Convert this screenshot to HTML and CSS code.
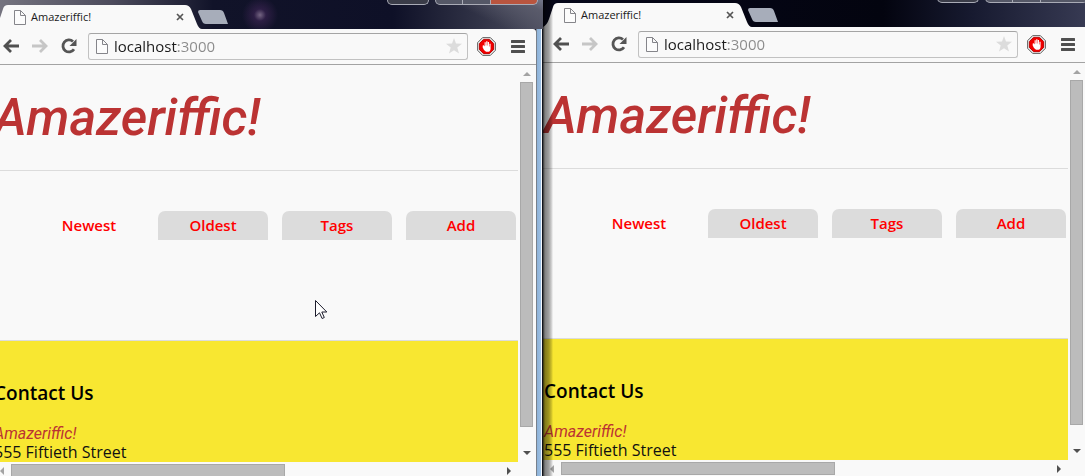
FILE: index.html
```html
<!DOCTYPE html>
<html lang="en">
<head>
<meta charset="utf-8">
<title>Amazeriffic!</title>
<link rel="stylesheet" href="styles.css">
</head>
<body>
<svg class="symbols" aria-hidden="true">
  <symbol id="page" viewBox="0 0 12 15"><path d="M.5.5h6l5 5v9H.5zM6.5.5v5h5" fill="#fcfcfc" stroke="#85858a"/></symbol>
  <symbol id="close" viewBox="0 0 8 8"><path d="M1 1l6 6M7 1L1 7" stroke="#555" stroke-width="1.7"/></symbol>
  <symbol id="tab" viewBox="0 0 209 24"><path d="M0 24Q4 22 6 16L10 4Q11 0 15 0H192Q196 0 198 4L204 19Q206 24 209 24Z" fill="#f9f9f9"/></symbol>
  <symbol id="newtab" viewBox="0 0 30 14"><path d="M2 0H22Q25 0 26 3L30 14H8Q5 14 4 11L0 2Q0 0 2 0Z" fill="#a7adba"/></symbol>
  <symbol id="arrow" viewBox="0 0 16 14"><path d="M8 1L2 7l6 6M2 7h14" fill="none" stroke="currentColor" stroke-width="2.8"/></symbol>
  <symbol id="reload" viewBox="0 0 16 16"><path d="M13 11.2A6 6 0 1 1 12 3.5" fill="none" stroke="#555" stroke-width="2.8"/><path d="M15.500 1v7H8.500z" fill="#555"/></symbol>
  <symbol id="star" viewBox="0 0 16 16"><path d="M8 0l2 5.500 6 .2-4.700 3.700L13 15.500l-5-3.300-5 3.300 1.700-6.100L0 5.700l6-.2z" fill="#dcdcdc"/></symbol>
  <symbol id="block" viewBox="0 0 20 20"><path d="M6 .5h8L19.500 6v8L14 19.500H6L.5 14V6z" fill="#ddd" stroke="#666"/><path d="M7 2.500h6L17.500 7v6L13 17.500H7L2.500 13V7z" fill="#f00000" stroke="#c00000"/><path d="M6 9l1.200-.4L8 10V5.500h1.200V9h.5V4.500H11V9h.4V5.200h1.200V10h.5V7h1.200v5.500Q14 15.500 11 15.500H9.500Q7.500 15 6 11z" fill="#fff"/></symbol>
  <symbol id="menu" viewBox="0 0 14 13"><path d="M1 1.500h12M1 6.500h12M1 11.500h12" stroke="#505050" stroke-width="3" stroke-linecap="round"/></symbol>
  <symbol id="tri" viewBox="0 0 8 4"><path d="M4 0l4 4H0z" fill="currentColor"/></symbol>
  <symbol id="side" viewBox="0 0 4 8"><path d="M0 0l4 4-4 4z" fill="currentColor"/></symbol>
</svg>
<div class="desktop">
  <section class="window front">
    <div class="titlebar">
      <div class="tab">
        <svg class="tab-shape"><use href="#tab"/></svg>
        <svg class="page-icon"><use href="#page"/></svg>
        <span class="tab-title">Amazeriffic!</span>
        <button class="tab-close" aria-label="Close tab"><svg><use href="#close"/></svg></button>
      </div>
      <button class="new-tab" aria-label="New tab"><svg><use href="#newtab"/></svg></button>
      <div class="captions">
        <button class="profile" aria-label="Profile"></button>
        <button aria-label="Minimize"></button><button aria-label="Maximize"></button><button class="exit" aria-label="Close"></button>
      </div>
    </div>
    <div class="toolbar">
      <button class="nav-btn" aria-label="Back"><svg><use href="#arrow"/></svg></button>
      <button class="nav-btn forward" aria-label="Forward"><svg><use href="#arrow"/></svg></button>
      <button class="nav-btn reload" aria-label="Reload"><svg><use href="#reload"/></svg></button>
      <div class="address">
        <svg class="page-icon"><use href="#page"/></svg>
        <input type="text" aria-label="Address" value="localhost:3000">
        <button class="star" aria-label="Bookmark"><svg><use href="#star"/></svg></button>
      </div>
      <button class="block" aria-label="Ad blocker"><svg><use href="#block"/></svg></button>
      <button class="menu" aria-label="Menu"><svg><use href="#menu"/></svg></button>
    </div>
    <div class="viewport">
      <div class="page">
        <header><h1>Amazeriffic!</h1></header>
        <main>
          <nav class="tabs"><a class="active" href="#newest">Newest</a><a href="#oldest">Oldest</a><a href="#tags">Tags</a><a href="#add">Add</a></nav>
        </main>
        <footer>
          <h2>Contact Us</h2>
          <address><em>Amazeriffic!</em><br>555 Fiftieth Street</address>
        </footer>
      </div>
      <div class="vscroll"><svg class="up"><use href="#tri"/></svg><div class="track"><div class="thumb"></div></div><svg class="down"><use href="#tri"/></svg></div>
      <div class="hscroll"><svg class="left"><use href="#side"/></svg><div class="track"><div class="thumb"></div></div><svg class="right"><use href="#side"/></svg></div>
    </div>
    <svg class="cursor" viewBox="0 0 13 20"><path d="M.5.5v16l4-3.700 2.600 5.700 2.200-1-2.500-5.500h5z" fill="#fff" stroke="#1c1c2c"/></svg>
  </section>
  <section class="window back">
    <div class="titlebar">
      <div class="tab">
        <svg class="tab-shape"><use href="#tab"/></svg>
        <svg class="page-icon"><use href="#page"/></svg>
        <span class="tab-title">Amazeriffic!</span>
        <button class="tab-close" aria-label="Close tab"><svg><use href="#close"/></svg></button>
      </div>
      <button class="new-tab" aria-label="New tab"><svg><use href="#newtab"/></svg></button>
      <div class="captions">
        <button class="profile" aria-label="Profile"></button>
        <button aria-label="Minimize"></button><button aria-label="Maximize"></button><button class="exit" aria-label="Close"></button>
      </div>
    </div>
    <div class="toolbar">
      <button class="nav-btn" aria-label="Back"><svg><use href="#arrow"/></svg></button>
      <button class="nav-btn forward" aria-label="Forward"><svg><use href="#arrow"/></svg></button>
      <button class="nav-btn reload" aria-label="Reload"><svg><use href="#reload"/></svg></button>
      <div class="address">
        <svg class="page-icon"><use href="#page"/></svg>
        <input type="text" aria-label="Address" value="localhost:3000">
        <button class="star" aria-label="Bookmark"><svg><use href="#star"/></svg></button>
      </div>
      <button class="block" aria-label="Ad blocker"><svg><use href="#block"/></svg></button>
      <button class="menu" aria-label="Menu"><svg><use href="#menu"/></svg></button>
    </div>
    <div class="viewport">
      <div class="page">
        <header><h1>Amazeriffic!</h1></header>
        <main>
          <nav class="tabs"><a class="active" href="#newest">Newest</a><a href="#oldest">Oldest</a><a href="#tags">Tags</a><a href="#add">Add</a></nav>
        </main>
        <footer>
          <h2>Contact Us</h2>
          <address><em>Amazeriffic!</em><br>555 Fiftieth Street</address>
        </footer>
      </div>
      <div class="vscroll"><svg class="up"><use href="#tri"/></svg><div class="track"><div class="thumb"></div></div><svg class="down"><use href="#tri"/></svg></div>
      <div class="hscroll"><svg class="left"><use href="#side"/></svg><div class="track"><div class="thumb"></div></div><svg class="right"><use href="#side"/></svg></div>
    </div>
  </section>
</div>
</body>
</html>
```
FILE: styles.css
```css
* { box-sizing: border-box; }
body { margin: 0; height: 100vh; overflow: hidden; background: #0b0d20; font-family: "Open Sans", "Noto Sans", sans-serif; }
button { padding: 0; border: 0; background: none; display: block; flex: none; }
svg { display: block; flex: none; }
.symbols { display: none; }

.desktop { display: grid; grid-template-columns: 1fr 1fr; height: calc(100vh + 2px); margin: 0 -8px 0 -7px; }
.window { position: relative; display: flex; flex-direction: column; min-width: 0; min-height: 0; padding-right: 7px; overflow: hidden; }
.front { background: linear-gradient(to right, #77808c 1px, #8db2d8 1px, #9dc0e4 5px, #f4f8fc 5px, #f4f8fc 6px, #10131c 6px) right / 7px 100% no-repeat; }
.back { margin-top: -2px; margin-bottom: 2px; background: #f9f9f9; }
.back::after { content: ""; position: absolute; inset: 0 auto 0 0; width: 10px; background: linear-gradient(to right, rgba(0,0,0,.8), rgba(0,0,0,.48) 2px, rgba(0,0,0,.35) 6px, rgba(0,0,0,.12) 9px, transparent); }

.titlebar { display: flex; flex: none; height: 29px; margin-right: -7px; padding-top: 5px; }
.front .titlebar { background: radial-gradient(circle at 267px 15px, #756583, rgba(64,38,87,.6) 6px, transparent 18px), linear-gradient(25deg, transparent 84%, #5a5b6b 96%, #72768a), linear-gradient(to right, #777681, #4c4b5c 120px, #111329 220px, #0e1027 400px, #4b4d5e); }
.back .titlebar { background: linear-gradient(to right, #06071a, #03040f 340px, #171a30 430px, #393c55); }
.tab { position: relative; display: flex; width: 209px; height: 24px; padding: 5px 18px 0 21px; }
.tab-shape { position: absolute; inset: 0; width: 209px; height: 24px; }
.page-icon { position: relative; width: 12px; height: 15px; }
.tab-title { position: relative; flex: 1; padding-left: 5px; font-size: 11px; line-height: 14px; color: #1a1a1a; }
.tab-close { position: relative; width: 8px; height: 14px; }
.tab-close svg { width: 8px; height: 8px; }
.new-tab { margin: 5px 0 0 -4px; width: 30px; height: 14px; }
.new-tab svg { width: 30px; height: 14px; }
.captions { display: flex; height: 5px; margin: -5px 5px 0 auto; }
.captions button { width: 28px; border: 1px solid #a9abb6; border-top: 0; border-left: 0; background: #555867; }
.captions .profile { width: 42px; margin-right: 6px; border-left: 1px solid #a9abb6; border-radius: 0 0 5px 5px; background: #3a3c48; }
.captions .profile + button { border-left: 1px solid #a9abb6; border-radius: 0 0 0 5px; }
.captions .exit { width: 47px; border-radius: 0 0 5px 0; }
.front .exit { background: #b9553f; }

.toolbar { display: flex; align-items: center; flex: none; height: 36px; padding: 0 11px 1px 10px; border-bottom: 1px solid #a3a3a3; background: #f9f9f9; }
.front .toolbar { border-top-right-radius: 3px; }
.nav-btn { margin-right: 13px; color: #505050; }
.nav-btn svg { width: 16px; height: 14px; }
.forward { color: #c6c6c6; }
.forward svg { transform: scaleX(-1); }
.reload { margin-right: 11px; }
.reload svg { width: 16px; height: 16px; }
.address { display: flex; align-items: center; flex: 1; min-width: 0; height: 27px; padding: 0 5px 0 7px; border: 1px solid #c2c2c2; border-top-color: #a5a5a5; border-radius: 3px; }
.address input { flex: 1; min-width: 0; height: 24px; margin-left: 6px; padding: 0; border: 0; outline: 0; font: 15px "Open Sans", sans-serif; color: transparent; background: linear-gradient(to right, #1c1c1c 64px, #8a8a8a 64px); -webkit-background-clip: text; background-clip: text; }
.star svg { width: 16px; height: 16px; }
.block { margin-left: 9px; }
.block svg { width: 19px; height: 19px; }
.menu { margin-left: 15px; }
.menu svg { width: 14px; height: 13px; }

.viewport { display: grid; flex: 1; min-height: 0; grid-template: minmax(0, 1fr) 16px / minmax(0, 1fr) 18px; background: #f9f9f9; }
.page { overflow: hidden; }
header { height: 106px; padding-top: 20px; border-bottom: 1px solid #dcdcdc; }
h1 { margin: 0; padding-left: 1px; font-family: Roboto, sans-serif; font-size: 51px; line-height: 66px; font-weight: 500; font-style: italic; color: #b33; white-space: nowrap; }
main { height: 169px; padding-top: 40px; }
.tabs { display: flex; justify-content: flex-end; gap: 14px; padding-right: 2px; }
.tabs a { width: 110px; height: 29px; border-radius: 7px 7px 0 0; background: #dcdcdc; color: #f00; font-size: 15px; line-height: 29px; font-weight: 600; text-align: center; text-decoration: none; }
.tabs .active { background: none; }
footer { height: 200px; padding: 38px 0 0 1px; border-top: 1px solid #dcdcdc; background: #f8e731; color: #111; }
h2 { margin: 0 0 17px; font-size: 19px; line-height: 28px; font-weight: 600; color: #000; }
address { font-style: normal; font-size: 16px; line-height: 19px; }
address em { color: #b33; font-family: Roboto, sans-serif; }

.track { flex: 1; min-width: 0; min-height: 0; }
.thumb { border: 1px solid #a8a8a8; background: #bcbcbc; }
.vscroll { display: flex; flex-direction: column; align-items: center; padding: 7px 3px 7px 2px; color: #505050; }
.vscroll .track { width: 13px; }
.vscroll .thumb { width: 13px; height: 95%; }
.vscroll svg { width: 8px; height: 4px; }
.up { margin-bottom: 6px; color: #a3a3a3; }
.down { margin-top: 6px; transform: scaleY(-1); }
.hscroll { display: flex; align-items: center; padding: 1px 7px 0 7px; color: #505050; }
.hscroll svg { width: 4px; height: 8px; }
.hscroll .thumb { width: 56%; height: 13px; }
.left { margin-right: 7px; transform: scaleX(-1); color: #a3a3a3; }
.right { margin-left: 7px; }
.cursor { position: absolute; left: 322px; top: 300px; width: 13px; height: 20px; }
```
